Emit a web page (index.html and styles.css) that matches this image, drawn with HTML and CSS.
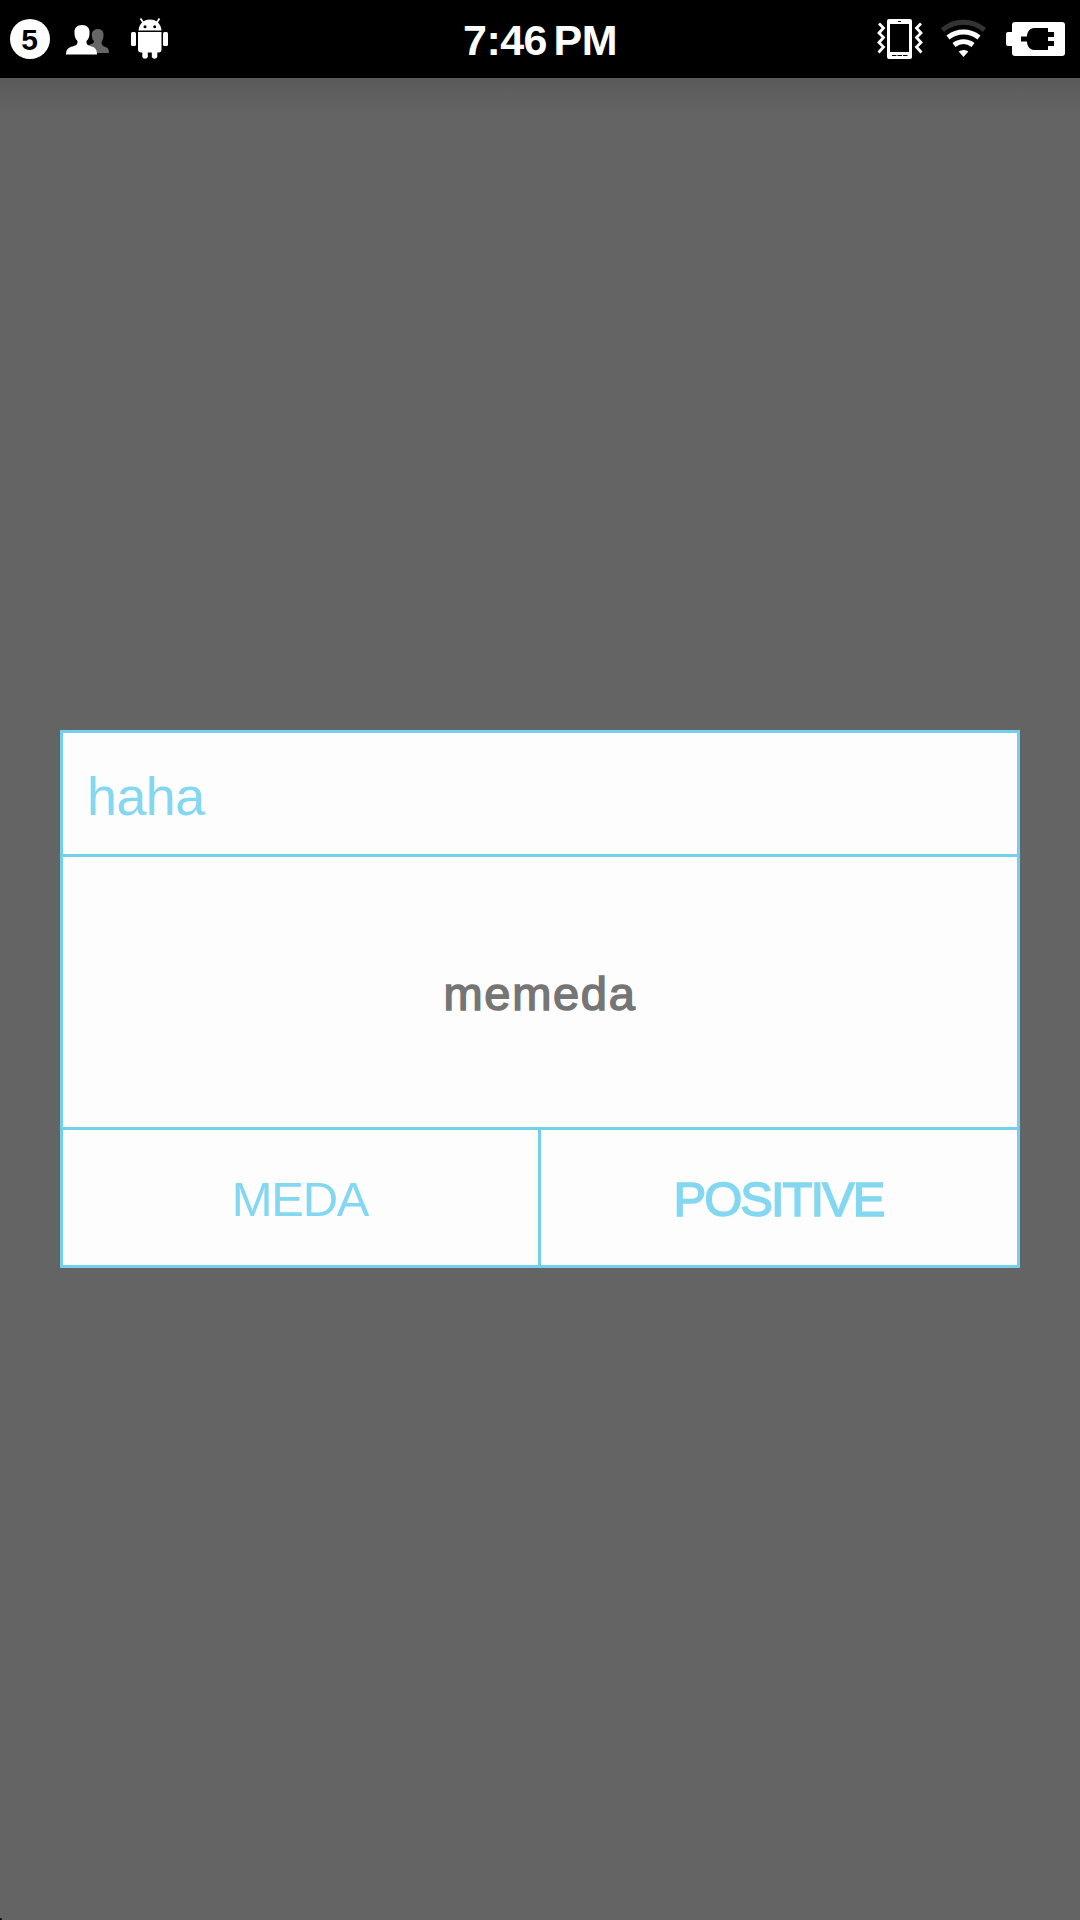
FILE: index.html
```html
<!DOCTYPE html>
<html lang="en">
<head>
<meta charset="utf-8">
<title>Dialog</title>
<link rel="stylesheet" href="styles.css">
</head>
<body>
<header class="status">
  <div class="status-left">
    <span class="badge">5</span>
    <svg class="people" width="44" height="30" viewBox="0 0 44 30">
      <path fill="#666" d="M32 4c4 0 6 3 5.500 7-.2 3-1 5-2 6 0 3 1 4 4 5 2.500 1 3.500 2 3.500 6H22V20c3-1 6-1 6-4-1.500-1-2-3-2-5-1-4 2-7 6-7z"/>
      <path fill="#fff" d="M16 0c5 0 8 3 7.500 8 0 4-1 6-3 8 0 3 .5 4 3.500 5 4 1 7 2 7 8.500H0C0 23 4 22 8 21c3-1 3.500-2 3.500-5-2-2-3-4-3-8C8 3 11 0 16 0z"/>
    </svg>
    <svg class="robot" width="38" height="44" viewBox="0 0 38 44" fill="#fff">
      <path d="M7.500 12.500C8 6 12.500 1.500 19 1.500S30 6 30.500 12.500z"/>
      <path d="M9.500 .5l3 4.500M28.500 .5l-3 4.500" stroke="#fff" stroke-width="1.800"/>
      <circle cx="14" cy="8.700" r="1.500" fill="#000"/><circle cx="23.700" cy="8.700" r="1.500" fill="#000"/>
      <path d="M7 14h23.500v17.500a3 3 0 0 1-3 3h-1.200V39a3 3 0 0 1-5.500 0v-4.500h-4V39a3 3 0 0 1-5.500 0v-4.500H10a3 3 0 0 1-3-3z"/>
      <rect x="0" y="14" width="5" height="14" rx="1.500"/><rect x="32" y="14" width="5" height="14" rx="1.500"/>
    </svg>
  </div>
  <div class="clock">7:46 PM</div>
  <div class="status-right">
    <svg class="vibrate" width="46" height="40" viewBox="0 0 46 40">
      <path fill="none" stroke="#fff" stroke-width="2.800" d="M2 4.500l4.500 4.500L2 14l4.500 4.500L2 23.500 6.500 28 1.500 33.500M44 4.500L39.500 9l4.500 5-4.500 4.500 4.500 5-4.500 4.500 5 5.500"/>
      <rect x="10" y="0" width="25" height="40" rx="2" fill="#fff"/>
      <path d="M13 5h19v28H13zM21 2h3v1h-3zM15 36h4.500v1H15zM20.500 36h4.500v1h-4.500zM26 36h4.500v1H26z"/>
    </svg>
    <svg class="wifi" width="48" height="38" viewBox="0 0 48 38">
      <g fill="none" stroke="#fff" stroke-width="5">
        <path stroke="#333" d="M2.500 11C15 .8 32 .8 44.500 11"/>
        <path d="M8 18.500c9.500-7.300 21.500-7.300 31 0"/>
        <path d="M14 26c5.800-4.200 13.200-4.200 19 0"/>
      </g>
      <path fill="#fff" d="M18.700 32.500c3-2 6.600-2 9.600 0L23.500 38z"/>
    </svg>
    <svg class="battery" width="59" height="34" viewBox="0 0 59 34">
      <path fill="#fff" d="M9 0h47a3 3 0 0 1 3 3v28a3 3 0 0 1-3 3H9a3 3 0 0 1-3-3v-7H2a2 2 0 0 1-2-2V12a2 2 0 0 1 2-2h4V3a3 3 0 0 1 3-3z"/>
      <path d="M28 6h14v4h6v5h-6v4h6v5h-6v4H28c-4 0-7-4-7-8.500h-6v-5h6C21 10 24 6 28 6z"/>
    </svg>
  </div>
</header>
<main class="scrim">
  <section class="dialog">
    <h1 class="title">haha</h1>
    <p class="message">memeda</p>
    <div class="actions">
      <div class="action negative"><span>MEDA</span></div>
      <div class="action positive"><span>POSITIVE</span></div>
    </div>
  </section>
</main>
</body>
</html>
```
FILE: styles.css
```css
* { box-sizing: border-box; margin: 0; }
body {
  width: 1080px;
  height: 1920px;
  display: flex;
  flex-direction: column;
  overflow: hidden;
  background: #646464;
  font-family: "Liberation Sans", Arial, sans-serif;
}
svg { display: block; }
.status {
  height: 78px;
  flex: none;
  display: grid;
  grid-template-columns: 1fr auto 1fr;
  background: #000;
  color: #fff;
}
.status-left, .status-right { display: flex; align-items: flex-start; }
.status-left { padding-left: 10px; }
.status-right { justify-content: flex-end; padding-right: 15px; }
.badge {
  width: 40px;
  height: 40px;
  margin-top: 19px;
  padding-right: 1px;
  border-radius: 50%;
  background: #fff;
  color: #000;
  font-size: 30px;
  font-weight: 700;
  line-height: 41px;
  text-align: center;
}
.people { margin: 25px 0 0 16px; }
.robot { margin: 18px 0 0 21px; }
.clock {
  font-size: 43px;
  font-weight: 700;
  line-height: 80px;
  letter-spacing: -0.6px;
  word-spacing: -4.500px;
}
.vibrate { margin-top: 19px; }
.wifi { margin: 19px 0 0 17px; }
.battery { margin: 22px 0 0 18px; }
.scrim {
  flex: 1;
  padding: 652px 60px 0;
  background:
    radial-gradient(circle at 0 100%, #000 1.5px, transparent 2.5px),
    linear-gradient(#595959, #5f5f5f 14px, #646464 36px);
}
.dialog {
  height: 538px;
  display: flex;
  flex-direction: column;
  border: 3px solid #72d0ed;
  background: #fdfdfd;
  color: #84d7f0;
}
.title {
  height: 124px;
  padding: 5px 24px 0;
  border-bottom: 3px solid #72d0ed;
  font-size: 54px;
  font-weight: 400;
  line-height: 116px;
  letter-spacing: -0.6px;
}
.message {
  height: 273px;
  padding-top: 3px;
  border-bottom: 3px solid #72d0ed;
  color: #757575;
  font-size: 47px;
  line-height: 267px;
  letter-spacing: 1.7px;
  text-align: center;
  -webkit-text-stroke: 1.5px #757575;
}
.actions { flex: 1; display: flex; }
.action {
  flex: 1;
  padding-top: 3px;
  font-size: 49px;
  line-height: 132px;
  text-align: center;
}
.negative {
  flex: 0 0 478px;
  padding-right: 1px;
  border-right: 3px solid #72d0ed;
  letter-spacing: -1.3px;
}
.positive {
  padding-right: 1px;
  letter-spacing: -2px;
  -webkit-text-stroke: 1.5px #84d7f0;
}
```
